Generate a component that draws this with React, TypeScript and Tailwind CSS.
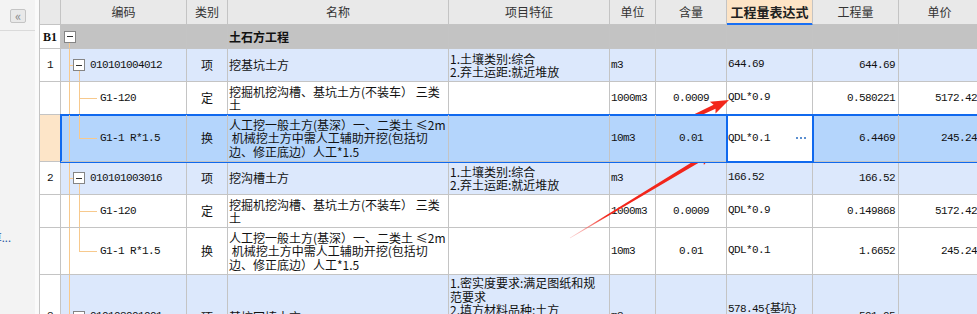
import clsx from "clsx";
import type { ReactNode } from "react";

const W = {
  no: "w-[21px]",
  code: "w-[126px]",
  type: "w-[41px]",
  name: "w-[221px]",
  feat: "w-[161px]",
  unit: "w-[46px]",
  qty: "w-[71px]",
  expr: "w-[86px]",
  amount: "w-[86px]",
  price: "w-[82px]",
};

const mono = "font-['Liberation_Mono','Noto_Sans_CJK_SC',monospace] text-[11px] tracking-[-0.6px]";
const TREE = "bg-[#f7c98d]";

type Tone = "section" | "group" | "item" | "selected";
type Node = "root" | "group" | "leaf" | "last";

type RowData = {
  h: string;
  tone: Tone;
  no?: string;
  node: Node;
  code?: string;
  type?: string;
  name?: string[];
  feat?: string[];
  unit?: string;
  qty?: string;
  expr?: string[];
  amount?: string;
  price?: string;
};

const FEAT_1 = ["1.土壤类别:综合", "2.弃土运距:就近堆放"];
const NAME_DIG = ["挖掘机挖沟槽、基坑土方(不装车） 三类", "土"];
const NAME_MAN = ["人工挖一般土方(基深）一、二类土 ≤2m", " 机械挖土方中需人工辅助开挖(包括切", "边、修正底边）人工*1.5"];

const rows: RowData[] = [
  { h: "h-[24px]", tone: "section", no: "B1", node: "root", name: ["土石方工程"] },
  {
    h: "h-[33px]", tone: "group", no: "1", node: "group", code: "010101004012", type: "项",
    name: ["挖基坑土方"], feat: FEAT_1, unit: "m3", expr: ["644.69"], amount: "644.69",
  },
  {
    h: "h-[33px]", tone: "item", node: "leaf", code: "G1-120", type: "定", name: NAME_DIG,
    unit: "1000m3", qty: "0.0009", expr: ["QDL*0.9"], amount: "0.580221", price: "5172.42",
  },
  {
    h: "h-[47px]", tone: "selected", node: "last", code: "G1-1 R*1.5", type: "换", name: NAME_MAN,
    unit: "10m3", qty: "0.01", expr: ["QDL*0.1"], amount: "6.4469", price: "245.24",
  },
  {
    h: "h-[33px]", tone: "group", no: "2", node: "group", code: "010101003016", type: "项",
    name: ["挖沟槽土方"], feat: FEAT_1, unit: "m3", expr: ["166.52"], amount: "166.52",
  },
  {
    h: "h-[33px]", tone: "item", node: "leaf", code: "G1-120", type: "定", name: NAME_DIG,
    unit: "1000m3", qty: "0.0009", expr: ["QDL*0.9"], amount: "0.149868", price: "5172.42",
  },
  {
    h: "h-[47px]", tone: "item", node: "last", code: "G1-1 R*1.5", type: "换", name: NAME_MAN,
    unit: "10m3", qty: "0.01", expr: ["QDL*0.1"], amount: "1.6652", price: "245.24",
  },
  {
    h: "h-[84px]", tone: "group", no: "3", node: "group", code: "010103001001", type: "项",
    name: ["基坑回填土方"],
    feat: ["1.密实度要求:满足图纸和规", "范要求", "2.填方材料品种:土方", "3.填方来源、运距:就近", "取土", "4.部位:基坑"],
    unit: "m3", expr: ["578.45{基坑}", "+12.6"], amount: "591.05",
  },
];

function Cell({
  w,
  className,
  line = "border-[#c4c4c4]",
  children,
}: {
  w: string;
  className?: string;
  line?: string;
  children?: ReactNode;
}) {
  return (
    <div
      className={clsx(
        "relative flex h-full shrink-0 items-center overflow-hidden whitespace-nowrap border-r border-b",
        line,
        w,
        className,
      )}
    >
      {children}
    </div>
  );
}

function Lines({ lines, className }: { lines: string[]; className?: string }) {
  return (
    <div className={clsx("flex flex-col leading-[13.5px]", className)}>
      {lines.map((l, i) => (
        <span key={i} className="whitespace-pre">
          {l}
        </span>
      ))}
    </div>
  );
}

function MinusBox() {
  return (
    <span className="relative z-10 flex h-[12px] w-[12px] shrink-0 items-center justify-center border border-[#858585] bg-white">
      <span className="h-px w-[6px] bg-[#333]" />
    </span>
  );
}

function CodeCell({ node, code }: { node: Node; code?: string }) {
  return (
    <Cell
      w={W.code}
      className={node === "root" ? "pl-[3px]" : node === "group" ? "pl-[12px]" : "pl-[39px]"}
    >
      {node === "root" ? (
        <span className={clsx("absolute bottom-0 left-[8px] top-1/2 mt-[6px] w-px", TREE)} />
      ) : (
        <span className={clsx("absolute bottom-0 left-[8px] top-0 w-px", TREE)} />
      )}
      {node === "group" && (
        <>
          <span className={clsx("absolute left-[8px] top-1/2 h-px w-[4px]", TREE)} />
          <span className={clsx("absolute bottom-0 left-[18px] top-1/2 mt-[6px] w-px", TREE)} />
        </>
      )}
      {node === "leaf" && <span className={clsx("absolute bottom-0 left-[18px] top-0 w-px", TREE)} />}
      {node === "last" && <span className={clsx("absolute left-[18px] top-0 h-1/2 w-px", TREE)} />}
      {(node === "leaf" || node === "last") && (
        <span className={clsx("absolute left-[18px] top-1/2 h-px w-[18px]", TREE)} />
      )}
      {(node === "root" || node === "group") && <MinusBox />}
      {code && <span className={clsx(mono, node === "group" && "ml-[5px]")}>{code}</span>}
    </Cell>
  );
}

function DataCells({ row }: { row: RowData }) {
  const selected = row.tone === "selected";
  return (
    <>
      <CodeCell node={row.node} code={row.code} />
      <Cell w={W.type} className="justify-center">
        {row.type}
      </Cell>
      <Cell w={W.name} className="pl-[1px]">
        {row.name && <Lines lines={row.name} className={row.tone === "section" ? "font-bold" : undefined} />}
      </Cell>
      <Cell w={W.feat} className="pl-[1px]">
        {row.feat && <Lines lines={row.feat} />}
      </Cell>
      <Cell w={W.unit} className="pl-[1px]">
        <span className={mono}>{row.unit}</span>
      </Cell>
      <Cell w={W.qty} className="justify-center">
        <span className={mono}>{row.qty}</span>
      </Cell>
      {selected ? (
        <Cell
          w={W.expr}
          className="z-20 justify-between bg-white pl-[1px] pr-[6px] outline-2 -outline-offset-1 outline-[#1069ee]"
        >
          <span className={mono}>{row.expr?.[0]}</span>
          <span className="flex gap-[2px]">
            <span className="h-[2px] w-[2px] bg-[#5b8fd0]" />
            <span className="h-[2px] w-[2px] bg-[#5b8fd0]" />
            <span className="h-[2px] w-[2px] bg-[#5b8fd0]" />
          </span>
        </Cell>
      ) : (
        <Cell w={W.expr} className="pl-[1px]">
          {row.expr && <Lines lines={row.expr} className={mono} />}
        </Cell>
      )}
      <Cell w={W.amount} className="justify-end pr-[3px]">
        <span className={mono}>{row.amount}</span>
      </Cell>
      <Cell w={W.price} className="justify-end pr-[3px]">
        <span className={mono}>{row.price}</span>
      </Cell>
    </>
  );
}

function Row({ row }: { row: RowData }) {
  const bg =
    row.tone === "section" ? "bg-[#c3c3c3]" : row.tone === "group" ? "bg-[#dce8fc]" : "bg-white";

  return (
    <div className={clsx("flex", row.h)}>
      <Cell
        w={W.no}
        className={clsx("justify-center", row.tone === "selected" ? "bg-[#fde5c8]" : "bg-white")}
      >
        {row.tone === "section" ? (
          <span className="font-['Liberation_Serif',serif] text-[12px] font-bold">{row.no}</span>
        ) : (
          <span className={mono}>{row.no}</span>
        )}
      </Cell>
      {row.tone === "selected" ? (
        <div className="relative z-10 flex h-full bg-[#b4d5fc] outline-2 -outline-offset-1 outline-[#1069ee]">
          <DataCells row={row} />
        </div>
      ) : (
        <div className={clsx("flex h-full", bg)}>
          <DataCells row={row} />
        </div>
      )}
    </div>
  );
}

const HEAD: [string, string][] = [
  ["", W.no],
  ["编码", W.code],
  ["类别", W.type],
  ["名称", W.name],
  ["项目特征", W.feat],
  ["单位", W.unit],
  ["含量", W.qty],
  ["工程量表达式", W.expr],
  ["工程量", W.amount],
  ["单价", W.price],
];

function Arrow({ id, from, to }: { id: string; from: [number, number]; to: [number, number] }) {
  const [x1, y1] = from;
  const [x2, y2] = to;
  const len = Math.hypot(x2 - x1, y2 - y1);
  const ux = (x2 - x1) / len;
  const uy = (y2 - y1) / len;
  const nx = -uy;
  const ny = ux;
  const head = 16;
  const wing = 6.5;
  const shaft = 2.2;
  const tail = 0.4;
  const bx = x2 - ux * head;
  const by = y2 - uy * head;
  const pts = [
    [x1 + nx * tail, y1 + ny * tail],
    [bx + nx * shaft, by + ny * shaft],
    [bx - ux * 2 + nx * wing, by - uy * 2 + ny * wing],
    [x2, y2],
    [bx - ux * 2 - nx * wing, by - uy * 2 - ny * wing],
    [bx - nx * shaft, by - ny * shaft],
    [x1 - nx * tail, y1 - ny * tail],
  ]
    .map(([x, y]) => `${x.toFixed(1)},${y.toFixed(1)}`)
    .join(" ");

  return (
    <>
      <defs>
        <linearGradient id={id} gradientUnits="userSpaceOnUse" x1={x1} y1={y1} x2={x2} y2={y2}>
          <stop offset="0" stopColor="#f7a3a3" stopOpacity="0.45" />
          <stop offset="0.25" stopColor="#f2261b" />
          <stop offset="1" stopColor="#f2261b" />
        </linearGradient>
      </defs>
      <polygon points={pts} fill={`url(#${id})`} />
    </>
  );
}

export default function App() {
  return (
    <div className="relative flex h-[314px] w-[977px] overflow-hidden bg-white font-['Noto_Sans_CJK_SC',sans-serif] text-[12px] text-[#111]">
      <aside className="flex h-full w-[40px] shrink-0 border-r border-[#c4c4c4]">
        <div className="flex w-[35px] flex-col bg-[#f3f3f3]">
          <div className="h-[31px] border-b border-[#dadada] pl-[10px] pt-[9px]">
            <div className="flex h-[14px] w-[16px] items-center justify-center rounded-[2px] border border-[#c4c4c4] bg-[#e9e9e9] pb-px text-[13px] leading-none text-[#8a8a8a]">
              «
            </div>
          </div>
          <div className="mt-[200px] flex h-[12px] w-[11px] justify-end overflow-hidden whitespace-nowrap text-[11px] leading-[12px] text-[#1d4fa0]">
            计算...
          </div>
        </div>
        <div className="w-[4px] bg-[#fafafa]" />
      </aside>

      <div className="min-w-0 flex-1 overflow-hidden">
        <div className="w-[941px]">
          <div className="flex h-[25px] bg-[#e9e9e9] text-[12px] text-[#333]">
            {HEAD.map(([label, w]) =>
              label === "工程量表达式" ? (
                <Cell
                  key={label}
                  w={w}
                  line="border-r-[#c4c4c4] border-b-[#1a6ff2]"
                  className="justify-center bg-[#fde4c6] text-[13px] font-bold text-[#222] shadow-[inset_0_-1px_0_#1a6ff2]"
                >
                  {label}
                </Cell>
              ) : (
                <Cell key={w + label} w={w} className="justify-center">
                  {label}
                </Cell>
              ),
            )}
          </div>
          {rows.map((row, i) => (
            <Row key={i} row={row} />
          ))}
        </div>
      </div>

      <svg className="pointer-events-none absolute inset-0" width="977" height="314">
        <Arrow id="a1" from={[606, 158]} to={[729, 100]} />
        <Arrow id="a2" from={[570, 238]} to={[716, 150]} />
      </svg>
    </div>
  );
}
